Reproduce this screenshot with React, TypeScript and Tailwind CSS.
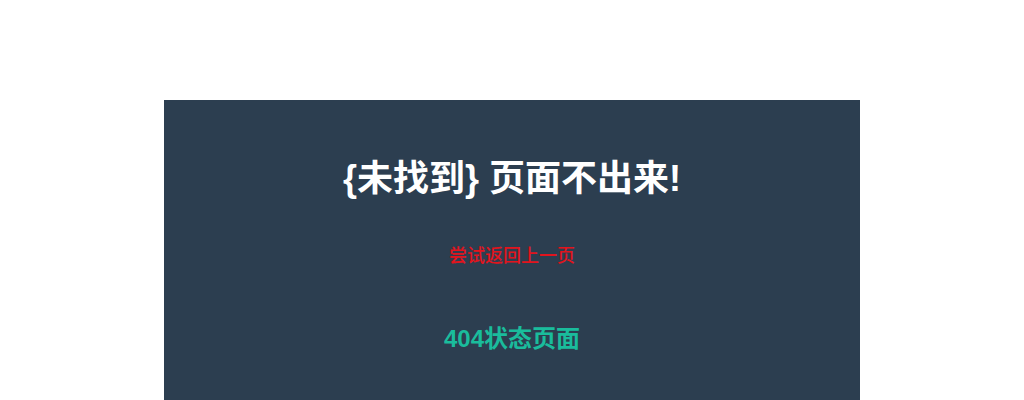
export default function App() {
  return (
    <div
      className="min-h-[400px] bg-white pt-[100px]"
      style={{ fontFamily: '"Liberation Sans", "Noto Sans CJK SC", sans-serif' }}
    >
      <div className="mx-auto flex h-[360px] w-[696px] flex-col items-center bg-[#2c3e50] pt-[52px]">
        <h1 className="text-[36px] font-bold leading-[54px] text-white">
          {'{未找到} 页面不出来!'}
        </h1>
        <p className="mt-[37px] text-[18px] font-medium leading-[27px] text-[#e2141d]">尝试返回上一页</p>
        <h2 className="mt-[51px] text-[24px] font-bold leading-[36px] text-[#1abc9c]">404状态页面</h2>
      </div>
    </div>
  );
}
